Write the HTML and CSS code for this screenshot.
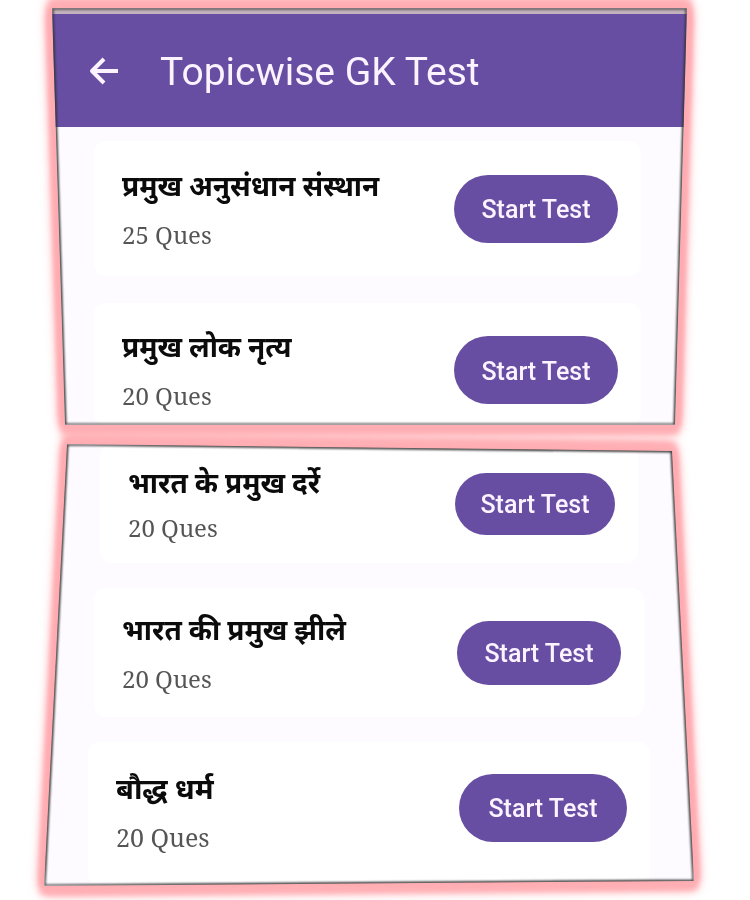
FILE: index.html
```html
<!DOCTYPE html>
<html lang="hi">
<head>
    <meta charset="UTF-8">
    <meta name="viewport" content="width=device-width, initial-scale=1.0">
    <title>Topicwise GK Test</title>
    <link rel="stylesheet" href="styles.css">
</head>
<body>
    <main class="page">
        <section class="panel panel-top">
            <header class="app-bar">
                <button class="back" type="button" aria-label="Back">
                    <svg viewBox="0 0 30 30" width="30" height="30" fill="none" stroke="#fbf3ff" stroke-width="4">
                        <path d="M30 14H4M16 2L4 14l12 12" stroke-linejoin="round"/>
                    </svg>
                </button>
                <h1>Topicwise GK Test</h1>
            </header>
            <ul class="topics">
                <li class="card">
                    <div class="topic">
                        <h2>प्रमुख अनुसंधान संस्थान</h2>
                        <p>25 Ques</p>
                    </div>
                    <button class="start" type="button">Start Test</button>
                </li>
                <li class="card">
                    <div class="topic">
                        <h2>प्रमुख लोक नृत्य</h2>
                        <p>20 Ques</p>
                    </div>
                    <button class="start" type="button">Start Test</button>
                </li>
            </ul>
            <svg class="edge" viewBox="0 0 635 417" preserveAspectRatio="none" aria-hidden="true">
                <polygon points="0,0 635,0 623,417 13,417"/>
            </svg>
        </section>

        <section class="panel panel-bottom">
            <ul class="topics">
                <li class="card far">
                    <div class="topic">
                        <h2>भारत के प्रमुख दर्रे</h2>
                        <p>20 Ques</p>
                    </div>
                    <button class="start" type="button">Start Test</button>
                </li>
                <li class="card mid">
                    <div class="topic">
                        <h2>भारत की प्रमुख झीले</h2>
                        <p>20 Ques</p>
                    </div>
                    <button class="start" type="button">Start Test</button>
                </li>
                <li class="card near">
                    <div class="topic">
                        <h2>बौद्ध धर्म</h2>
                        <p>20 Ques</p>
                    </div>
                    <button class="start" type="button">Start Test</button>
                </li>
            </ul>
            <svg class="edge" viewBox="0 0 650 442" preserveAspectRatio="none" aria-hidden="true">
                <polygon points="23,0 628,7 650,437 0,442"/>
            </svg>
        </section>
    </main>
</body>
</html>
```
FILE: styles.css
```css
* {
    box-sizing: border-box;
}

body {
    margin: 0;
    background: #fff;
    font-family: Roboto, "Noto Sans", sans-serif;
}

h1, h2, p, ul {
    margin: 0;
    padding: 0;
}

/* One pink glow around both panels: spread first, then soften */
.page {
    display: flex;
    flex-direction: column;
    gap: 19px;
    padding: 8px 56px 14px 44px;
    filter:
        drop-shadow(4px 0 2px #ffabb1)
        drop-shadow(-4px 0 2px #ffabb1)
        drop-shadow(0 8px 2px #ffb0b5)
        drop-shadow(0 -8px 2px #ffb0b5)
        drop-shadow(0 0 4px #ffc4c8);
}

/* Slanted panels */
.panel {
    position: relative;
    background: #fdfbff;
}

.panel-top {
    margin: 0 7px 0 8px;
    clip-path: polygon(0 0, 100% 0, calc(100% - 12px) 100%, 13px 100%);
}

.panel-bottom {
    clip-path: polygon(23px 0, calc(100% - 22px) 7px, 100% calc(100% - 5px), 0 100%);
}

.edge {
    position: absolute;
    inset: 0;
    width: 100%;
    height: 100%;
    fill: none;
    stroke: #333;
    stroke-width: 3;
    filter: blur(1px);
    pointer-events: none;
}

/* App bar */
.app-bar {
    display: flex;
    align-items: center;
    gap: 42px;
    height: 119px;
    padding: 2px 36px 0;
    border-top: 6px solid #c3b2bd;
    background: #674ea2;
}

.back {
    width: 30px;
    height: 30px;
    padding: 0;
    border: 0;
    background: none;
}

.back svg {
    display: block;
}

h1 {
    color: #fbf3ff;
    font-size: 39px;
    font-weight: 400;
    line-height: 48px;
}

/* Topic cards */
.topics {
    display: flex;
    flex-direction: column;
    list-style: none;
}

.panel-top .topics {
    gap: 27px;
    padding-top: 14px;
}

.panel-bottom .topics {
    gap: 25px;
}

.card {
    display: flex;
    justify-content: space-between;
    align-items: center;
    margin: 0 46px 0 42px;
    padding: 0 23px 0 28px;
    min-height: 135px;
    border-radius: 12px;
    background: #fff;
}

.panel-top .card:last-child {
    min-height: 122px;
    padding-top: 12px;
}

.card.far {
    min-height: 119px;
    margin: 0 56px;
}

.card.mid {
    min-height: 129px;
    margin: 0 50px;
}

.card.near {
    min-height: 144px;
    margin: 0 44px;
    padding-bottom: 13px;
}

.topic {
    padding-top: 4px;
}

.topic h2 {
    color: #0b0b0b;
    font-size: 28px;
    font-weight: 700;
    line-height: 48px;
}

.topic p {
    color: #555;
    font-family: "Noto Serif", "DejaVu Serif", serif;
    font-size: 24px;
    line-height: 48px;
}

.start {
    width: 164px;
    height: 68px;
    padding: 2px 0 0;
    border: 0;
    border-radius: 34px;
    background: #674ea2;
    color: #fbf3ff;
    font-family: inherit;
    font-size: 25px;
    font-weight: 500;
}

/* The lower panel widens towards the viewer */
.far .start {
    width: 160px;
    height: 62px;
}

.far h2,
.far p {
    line-height: 44px;
}

.mid .start {
    height: 64px;
}

.near .start {
    width: 168px;
}

.near .topic {
    padding-top: 10px;
}

.near h2 {
    font-size: 29px;
}

.near p {
    font-size: 25px;
}
```
